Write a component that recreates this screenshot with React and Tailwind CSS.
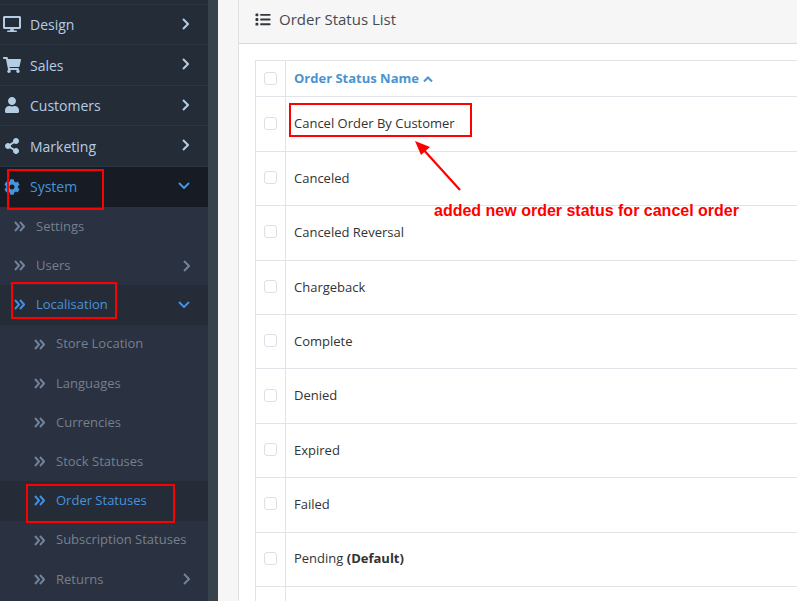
import { FaDesktop, FaShoppingCart, FaUser, FaShareAlt, FaCog, FaList } from "react-icons/fa";

const topItems = [
  { label: "Design", Icon: FaDesktop },
  { label: "Sales", Icon: FaShoppingCart },
  { label: "Customers", Icon: FaUser },
  { label: "Marketing", Icon: FaShareAlt },
];

const localisation = [
  { label: "Store Location" },
  { label: "Languages" },
  { label: "Currencies" },
  { label: "Stock Statuses" },
  { label: "Order Statuses", active: true },
  { label: "Subscription Statuses" },
  { label: "Returns", more: true },
];

const statuses = ["Cancel Order By Customer", "Canceled", "Canceled Reversal", "Chargeback", "Complete", "Denied", "Expired", "Failed"];

const Check = () => <span className="block w-[13px] h-[13px] rounded-[3px] border border-[#dcdfe6] bg-white" />;

const Mark = ({ className }) => <div className={`absolute border-2 border-[#ff0000] ${className}`} />;

const AngleRight = ({ className }) => (
  <svg className={className} width="7" height="12" viewBox="0 0 7 12" fill="none" stroke="currentColor" strokeWidth="2">
    <polyline points="1,1 6,6 1,11" />
  </svg>
);

const AngleDown = ({ className }) => (
  <svg className={className} width="12" height="7" viewBox="0 0 12 7" fill="none" stroke="currentColor" strokeWidth="2">
    <polyline points="1,1 6,6 11,1" />
  </svg>
);

const AngleUp = () => (
  <svg width="10" height="6" viewBox="0 0 10 6" fill="none" stroke="currentColor" strokeWidth="2">
    <polyline points="1,5.5 5,1.5 9,5.5" />
  </svg>
);

const DoubleRight = ({ className }) => (
  <svg className={className} width="11" height="11" viewBox="0 0 11 11" fill="none" stroke="currentColor" strokeWidth="2">
    <polyline points="1,1 5,5.5 1,10" />
    <polyline points="6,1 10,5.5 6,10" />
  </svg>
);

const SubItem = ({ label, active, more, indent, open }) => (
  <div className={`flex items-center h-[39.2px] pr-[18px] text-[13px] ${indent ? "pl-[34px]" : "pl-[14px]"} ${active ? "bg-[#252c37] text-[#4594de]" : "text-[#75808f]"}`}>
    <DoubleRight className={active ? "text-[#3f90e2]" : "text-[#71829a]"} />
    <span className="ml-[11px] flex-1">{label}</span>
    {more && <AngleRight className="text-[#71829a]" />}
    {open && <AngleDown className="text-[#3f90e2]" />}
  </div>
);

export default function App() {
  return (
    <div className="relative flex h-[601px] w-[797px] overflow-hidden bg-[#f6f6f6] font-['Open_Sans',sans-serif]">
      <aside className="w-[218px] shrink-0 border-r-[10px] border-[#37424b] bg-[#2a3140]">
        <div className="h-[4.5px] border-b border-[#2c3541] bg-[#242c38]" />
        {topItems.map(({ label, Icon }) => (
          <div key={label} className="flex items-center h-[40.5px] pl-[3px] pr-[19px] bg-[#242c38] border-b border-[#2c3541] text-[14px] text-[#b4cde3]">
            <span className="flex justify-center w-[18px]">
              <Icon className="w-[18px] h-[16px]" />
            </span>
            <span className="ml-[9px] flex-1 pt-[1px]">{label}</span>
            <AngleRight className="mb-[1px]" />
          </div>
        ))}
        <div className="flex items-center h-[40.5px] pl-[3px] pr-[18px] bg-[#171b24] text-[14px] text-[#4594de]">
          <span className="flex justify-center w-[18px]">
            <FaCog className="w-[16px] h-[16px]" />
          </span>
          <span className="ml-[9px] flex-1">System</span>
          <AngleDown className="mb-[3px]" />
        </div>
        <SubItem label="Settings" />
        <SubItem label="Users" more />
        <SubItem label="Localisation" active open />
        {localisation.map((item) => (
          <SubItem key={item.label} indent {...item} />
        ))}
      </aside>

      <main className="ml-[20px] w-[600px] shrink-0 border-l border-[#dddfe3] bg-white">
        <div className="flex items-center h-[44px] pl-[16px] pb-[4px] border-b border-[#d9d9d9] bg-[#f6f6f6] text-[15px] text-[#454a50]">
          <FaList className="w-[16px] h-[15px] text-[#33383e]" />
          <span className="ml-[8px]">Order Status List</span>
        </div>
        <div className="pl-[16px] pt-[16px]">
          <table className="w-[600px] border-collapse table-fixed text-[13px] text-[#333333]">
            <thead>
              <tr className="h-[36.4px]">
                <td className="w-[30px] border border-[#e2e3e9] pl-[8px]">
                  <Check />
                </td>
                <td className="border border-[#e2e3e9] pl-[8px] font-bold text-[#4b94d0]">
                  <span className="inline-flex items-center gap-[4px]">
                    Order Status Name <AngleUp />
                  </span>
                </td>
              </tr>
            </thead>
            <tbody>
              {statuses.map((name) => (
                <tr key={name} className="h-[54.4px]">
                  <td className="border border-[#e2e3e9] pl-[8px] pb-[2px]">
                    <Check />
                  </td>
                  <td className="border border-[#e2e3e9] pl-[8px]">{name}</td>
                </tr>
              ))}
              <tr className="h-[54.4px]">
                <td className="border border-[#e2e3e9] pl-[8px] pb-[2px]">
                  <Check />
                </td>
                <td className="border border-[#e2e3e9] pl-[8px]">
                  Pending <b>(Default)</b>
                </td>
              </tr>
              <tr className="h-[54.4px]">
                <td className="border border-[#e2e3e9]" />
                <td className="border border-[#e2e3e9]" />
              </tr>
            </tbody>
          </table>
        </div>
      </main>

      {/* red annotations drawn over the screenshot */}
      <Mark className="left-[7px] top-[169px] w-[97px] h-[41px]" />
      <Mark className="left-[11px] top-[282px] w-[106px] h-[37px]" />
      <Mark className="left-[26px] top-[484px] w-[149px] h-[39px]" />
      <Mark className="left-[289px] top-[103px] w-[183px] h-[34px]" />
      <svg className="absolute left-[410px] top-[135px]" width="56" height="60" viewBox="0 0 56 60">
        <line x1="50" y1="55" x2="12" y2="13" stroke="#ff0000" strokeWidth="2.2" />
        <polygon points="5,6 20,12 11,20" fill="#ff0000" />
      </svg>
      <span className="absolute left-[434px] top-[202px] font-['Liberation_Sans',sans-serif] text-[16px] leading-[18px] font-bold text-[#ff0000] whitespace-nowrap">
        added new order status for cancel order
      </span>
    </div>
  );
}
